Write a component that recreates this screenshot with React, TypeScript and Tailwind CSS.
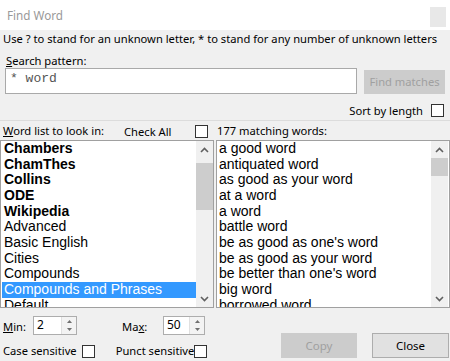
import React from "react";

const ui = { fontFamily: '"Noto Sans", "Open Sans", sans-serif' };
const arial = { fontFamily: '"Liberation Sans", Arial, sans-serif' };

const lists = [
  { t: "Chambers", b: true },
  { t: "ChamThes", b: true },
  { t: "Collins", b: true },
  { t: "ODE", b: true },
  { t: "Wikipedia", b: true },
  { t: "Advanced" },
  { t: "Basic English" },
  { t: "Cities" },
  { t: "Compounds" },
  { t: "Compounds and Phrases", sel: true },
  { t: "Default" },
];

const words = [
  "a good word",
  "antiquated word",
  "as good as your word",
  "at a word",
  "a word",
  "battle word",
  "be as good as one's word",
  "be as good as your word",
  "be better than one's word",
  "big word",
  "borrowed word",
];

function Box({ className = "" }: { className?: string }) {
  return <div className={"w-[13px] h-[13px] shrink-0 border border-[#333] bg-white " + className} />;
}

function Chevron({ up }: { up?: boolean }) {
  return (
    <svg width="9" height="6" viewBox="0 0 9 6">
      <path
        d={up ? "M1 5 L4.5 1.5 L8 5" : "M1 1 L4.5 4.5 L8 1"}
        fill="none"
        stroke="#606060"
        strokeWidth="1.6"
      />
    </svg>
  );
}

function Scroll({ top, h }: { top: number; h: number }) {
  return (
    <div className="w-[17px] h-full bg-[#f0f0f0] flex flex-col items-center relative">
      <div className="h-[17px] flex items-center justify-center">
        <Chevron up />
      </div>
      <div className="flex-1" />
      <div className="h-[17px] flex items-center justify-center">
        <Chevron />
      </div>
      <div className="absolute left-0 w-[17px] bg-[#cdcdcd]" style={{ top, height: h }} />
    </div>
  );
}

function Spin({ v, w }: { v: string; w: string }) {
  return (
    <div className={"h-[19px] border border-[#adadad] bg-white flex " + w}>
      <div className="flex-1 pl-[3px] text-[12px] leading-[15px] text-black" style={ui}>
        {v}
      </div>
      <div className="w-[15px] flex flex-col border-l border-[#e0e0e0]">
        <div className="flex-1 flex items-center justify-center bg-[#f3f3f3]">
          <svg width="5" height="3" viewBox="0 0 5 3"><path d="M0 3 L2.5 0 L5 3Z" fill="#707070" /></svg>
        </div>
        <div className="flex-1 flex items-center justify-center bg-[#f3f3f3]">
          <svg width="5" height="3" viewBox="0 0 5 3"><path d="M0 0 L2.5 3 L5 0Z" fill="#707070" /></svg>
        </div>
      </div>
    </div>
  );
}

export default function App() {
  return (
    <div className="w-[450px] h-[361px] bg-[#f0f0f0] overflow-hidden text-[11.2px] text-black" style={ui}>
      <div className="h-[30px] bg-white flex items-start justify-between pl-[7px] pr-[4px]">
        <span className="mt-[7px] text-[#999] text-[11.7px] leading-[16px]">Find Word</span>
        <div className="mt-[7px] w-[16px] h-[20px] bg-[#e8e8e8]" />
      </div>
      <div className="h-[16px] mt-[1px] px-[3px] leading-[16px] whitespace-nowrap">
        Use ? to stand for an unknown letter, * to stand for any number of unknown letters
      </div>
      <div className="h-[14px] mt-[7px] pl-[6px] leading-[14px]">
        <span className="underline">S</span>earch pattern:
      </div>
      <div className="h-[26px] flex">
        <div className="ml-[5px] w-[352px] h-[26px] border border-[#a9a9a9] bg-white pl-[4px] pt-[1px]">
          <span className="text-[13px] leading-[15px] text-[#555]" style={{ fontFamily: '"Liberation Mono", monospace' }}>
            * word
          </span>
        </div>
        <div className="ml-[7px] mt-[2px] w-[81px] h-[24px] bg-[#cccccc] flex items-center justify-center text-[#a0a0a0]">
          Find matches
        </div>
      </div>
      <div className="h-[13px] mt-[10px] flex items-center justify-end pr-[6px]">
        <span className="leading-[13px]">Sort by length</span>
        <Box className="ml-[8px]" />
      </div>
      <div className="mt-[3px] h-px bg-[#dcdcdc]" />
      <div className="mt-[3px] h-[14px] flex items-center">
        <span className="ml-[3px] w-[121px] leading-[14px]">
          <span className="underline">W</span>ord list to look in:
        </span>
        <span className="w-[71px] leading-[14px] mt-[2px]">Check All</span>
        <Box />
        <span className="ml-[9px] leading-[14px]">177 matching words:</span>
      </div>
      <div className="mt-[2px] h-[168px] flex">
        <div className="w-[214px] h-full border border-[#a0a0a0] bg-white flex overflow-hidden">
          <div className="flex-1 pl-[1px] overflow-hidden" style={arial}>
            {lists.map((l) => (
              <div
                key={l.t}
                className={
                  "h-[15.67px] leading-[15.67px] text-[14px] pl-[2px] whitespace-nowrap " +
                  (l.b ? "font-bold " : "") +
                  (l.sel ? "bg-[#3399ff] text-white" : "text-black")
                }
              >
                {l.t}
              </div>
            ))}
          </div>
          <Scroll top={22} h={47} />
        </div>
        <div className="ml-[2px] w-[234px] h-full border border-[#a0a0a0] bg-white flex overflow-hidden">
          <div className="flex-1 pl-[2px] overflow-hidden" style={arial}>
            {words.map((w) => (
              <div key={w} className="h-[15.67px] leading-[15.67px] text-[14px] whitespace-nowrap">
                {w}
              </div>
            ))}
          </div>
          <Scroll top={17} h={18} />
          <div className="w-[1px]" />
        </div>
      </div>
      <div className="flex h-[53px]">
        <div className="flex flex-col">
          <div className="mt-[8px] h-[19px] flex items-center">
            <span className="ml-[3px] w-[30px] mt-[4px]">
              <span className="underline">M</span>in:
            </span>
            <Spin v="2" w="w-[44px]" />
            <span className="ml-[45px] w-[41px] mt-[4px]">
              Ma<span className="underline">x</span>:
            </span>
            <Spin v="50" w="w-[42px]" />
          </div>
          <div className="mt-[9px] h-[14px] flex items-center">
            <span className="ml-[3px] leading-[14px]">Case sensitive</span>
            <Box className="ml-[5px]" />
            <span className="ml-[21px] leading-[14px]">Punct sensitive</span>
            <Box />
          </div>
        </div>
        <div className="flex-1" />
        <div className="flex mt-[25px] h-[25px]">
          <div className="w-[76px] h-[25px] bg-[#cccccc] text-[#a0a0a0] text-[11.5px] flex items-center justify-center">Copy</div>
          <div className="ml-[15px] w-[77px] h-[25px] bg-[#e1e1e1] border border-[#adadad] text-[11.5px] flex items-center justify-center">
            Close
          </div>
          <div className="w-[1px]" />
        </div>
      </div>
    </div>
  );
}
